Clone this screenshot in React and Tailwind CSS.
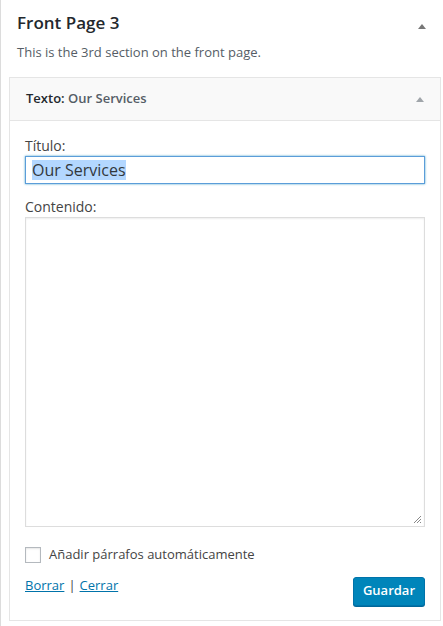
import React from "react";

function Caret({ className }) {
  return (
    <svg width="8" height="5" viewBox="0 0 8 5" className={className}>
      <path d="M0 5 L4 0 L8 5 Z" fill="currentColor" />
    </svg>
  );
}

export default function App() {
  return (
    <div
      className="w-[443px] h-[626px] bg-white border-l border-[#dcdcdc] overflow-hidden"
      style={{ fontFamily: '"Open Sans", sans-serif' }}
    >
      {/* section header */}
      <div className="flex items-start justify-between pl-[16px] pr-[17px] pt-[8px]">
        <h2 className="text-[17px] leading-[30px] font-semibold text-[#23282d]">Front Page 3</h2>
        <Caret className="mt-[16px] text-[#777]" />
      </div>
      <p className="pl-[16px] mt-[5px] text-[13px] leading-[18px] text-[#555d66]">
        This is the 3rd section on the front page.
      </p>

      {/* widget card */}
      <div className="ml-[8px] mr-[2px] mt-[16px] border border-[#e5e5e5] bg-white">
        <div className="flex items-center justify-between h-[43px] pl-[16px] pr-[16px] bg-[#f9f9f9] border-b border-[#e5e5e5]">
          <h3 className="text-[13px] font-semibold text-[#23282d]">
            Texto: <span className="text-[#555d66]">Our Services</span>
          </h3>
          <Caret className="text-[#a0a5aa]" />
        </div>

        <div className="px-[15px] pt-[15px] pb-[14px]">
          <label className="block text-[14px] leading-[19px] text-[#444]">Título:</label>
          <div className="mt-[1px] h-[28px] border border-[#5b9dd9] shadow-[0_0_2px_rgba(30,140,190,0.8)] flex items-center px-[6px]">
            <span className="bg-[#b3d7ff] text-[16px] leading-[20px] text-[#32373c]">Our Services</span>
          </div>

          <label className="block mt-[13px] text-[14px] leading-[19px] text-[#444]">Contenido:</label>
          <div className="relative mt-[1px] h-[310px] border border-[#dddddd] shadow-[inset_0_1px_2px_rgba(0,0,0,0.07)]">
            <svg width="9" height="9" viewBox="0 0 9 9" className="absolute right-[2px] bottom-[2px]">
              <path d="M1 8 L8 1 M4 8 L8 4 M7 8 L8 7" stroke="#888" strokeWidth="1" />
            </svg>
          </div>

          <div className="flex items-center mt-[18px]">
            <div className="w-[16px] h-[16px] border border-[#b4b9be] bg-white shadow-[inset_0_1px_2px_rgba(0,0,0,0.1)]" />
            <span className="ml-[8px] text-[13px] text-[#444]">Añadir párrafos automáticamente</span>
          </div>

          <div className="flex items-start justify-between mt-[12px]">
            <div className="text-[13px] leading-[18px] text-[#444] -mt-[1px]">
              <a className="text-[#0073aa] underline">Borrar</a>
              <span className="mx-[4px]">|</span>
              <a className="text-[#0073aa] underline">Cerrar</a>
            </div>
            <button className="h-[29px] px-[9px] rounded-[3px] bg-[#0085ba] border border-[#0073aa] shadow-[0_1px_0_#006799] text-white text-[13px] font-semibold">
              Guardar
            </button>
          </div>
        </div>
      </div>
    </div>
  );
}
